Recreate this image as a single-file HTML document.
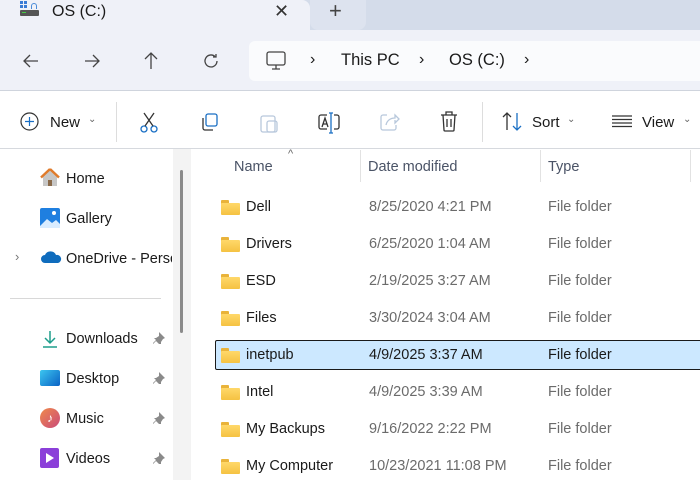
<!DOCTYPE html>
<html><head><style>
*{margin:0;padding:0;box-sizing:border-box}
body{width:700px;height:480px;overflow:hidden;background:#fff;font-family:"Liberation Sans",sans-serif;position:relative;color:#1a1a1a}
.abs{position:absolute}
.t{font-size:14.5px;white-space:nowrap}
svg{position:absolute;overflow:visible}
</style></head><body>
<div class="abs" style="left:0;top:0;width:700px;height:31px;background:#d4dcea"></div>
<div class="abs" style="left:0;top:0;width:310px;height:31px;background:#eff1f8;border-radius:0 8px 0 0"></div>
<div class="abs" style="left:310px;top:0;width:56px;height:30px;background:#dde3ef;border-radius:0 0 8px 8px"></div>
<div class="abs" style="left:0;top:30px;width:700px;height:61px;background:#eff1f8;border-bottom:1px solid #cfd4dd"></div>
<div class="abs" style="left:249px;top:41px;width:451px;height:40px;background:#fafbfd;border-radius:6px 0 0 6px"></div>
<!-- tab -->
<div class="abs" style="left:20px;top:1px;width:3px;height:3px;background:#3a7bd5;box-shadow:4px 0 #3a7bd5,0 4px #3a7bd5,4px 4px #3a7bd5"></div>
<div class="abs" style="left:31px;top:3px;width:6px;height:6px;border:1.5px solid #4a8bd8;border-bottom:none;border-radius:3px 3px 0 0"></div>
<div class="abs" style="left:20px;top:10px;width:19px;height:6px;background:#555;border-radius:1px"></div>
<div class="abs" style="left:22px;top:12px;width:4px;height:1px;background:#4c4"></div>
<div class="abs t" style="left:52px;top:3px;font-size:16px">OS (C:)</div>
<div class="abs" style="left:274px;top:1px;font-size:18px;color:#333">✕</div>
<div class="abs" style="left:329px;top:-2px;font-size:22px;color:#444">+</div>
<!-- nav -->
<svg style="left:23px;top:53px" width="16" height="16" fill="none" stroke="#444" stroke-width="1.3"><path d="M15 8H1M7 2L1 8l6 6"/></svg>
<svg style="left:84px;top:53px" width="16" height="16" fill="none" stroke="#444" stroke-width="1.3"><path d="M1 8h14M9 2l6 6-6 6"/></svg>
<svg style="left:143px;top:52px" width="16" height="17" fill="none" stroke="#444" stroke-width="1.3"><path d="M8 17V1M2 7l6-6 6 6"/></svg>
<svg style="left:203px;top:53px" width="16" height="16" fill="none" stroke="#444" stroke-width="1.3"><path d="M14 8a6 6 0 1 1-2-4.5M13 1v3h-3"/></svg>
<svg style="left:266px;top:51px" width="20" height="20" fill="none" stroke="#444" stroke-width="1.3"><rect x="1" y="1" width="18" height="13" rx="2"/><path d="M10 14v4M6 18h8"/></svg>
<div class="abs t" style="left:310px;top:51px;font-size:16px">›</div>
<div class="abs t" style="left:341px;top:51px;font-size:16.5px">This PC</div>
<div class="abs t" style="left:419px;top:51px;font-size:16px">›</div>
<div class="abs t" style="left:449px;top:51px;font-size:16.5px">OS (C:)</div>
<div class="abs t" style="left:524px;top:51px;font-size:16px">›</div>
<!-- toolbar -->
<div class="abs" style="left:0;top:148px;width:700px;height:1px;background:#d6d9de"></div>
<svg style="left:20px;top:112px" width="19" height="19" fill="none" stroke="#333" stroke-width="1.2"><circle cx="9.5" cy="9.5" r="8.5"/><path d="M9.5 5v9M5 9.5h9" stroke="#1a6fc4"/></svg>
<div class="abs t" style="left:50px;top:114px;font-size:15px">New</div>
<div class="abs" style="left:88px;top:114px;font-size:10px;color:#666">⌄</div>
<div class="abs" style="left:116px;top:102px;width:1px;height:40px;background:#ddd"></div>
<svg style="left:140px;top:112px" width="18" height="21" fill="none" stroke="#1a6fc4" stroke-width="1.3"><circle cx="4" cy="17" r="3"/><circle cx="14" cy="17" r="3"/><path d="M5 14L14 1M13 14L4 1" stroke="#333"/></svg>
<svg style="left:200px;top:113px" width="19" height="18" fill="none" stroke="#1a6fc4" stroke-width="1.3"><rect x="6" y="1" width="11" height="12" rx="2"/><path d="M3 5v10a2 2 0 0 0 2 2h8" stroke="#333"/></svg>
<svg style="left:260px;top:113px" width="18" height="20" fill="none" stroke="#b8c8dc" stroke-width="1.3"><rect x="1" y="3" width="14" height="16" rx="2"/><rect x="7" y="8" width="10" height="11" rx="2"/></svg>
<svg style="left:318px;top:112px" width="22" height="22" fill="none" stroke="#333" stroke-width="1.3"><path d="M9 3H3a2 2 0 0 0-2 2v10a2 2 0 0 0 2 2h6M16 3h3a2 2 0 0 1 2 2v10a2 2 0 0 1-2 2h-3"/><path d="M4 15l3-9 3 9M5 12h4"/><path d="M13 1v20M11 1h4M11 21h4" stroke="#1a6fc4"/></svg>
<svg style="left:380px;top:113px" width="20" height="18" fill="none" stroke="#b8c8dc" stroke-width="1.3"><path d="M7 2H3a2 2 0 0 0-2 2v11a2 2 0 0 0 2 2h11a2 2 0 0 0 2-2v-3M6 12c1-5 5-7 9-7V2l4 4-4 4V7"/></svg>
<svg style="left:440px;top:111px" width="18" height="21" fill="none" stroke="#333" stroke-width="1.3"><path d="M1 4h16M6 4V1h6v3M3 4l1 15a1 1 0 0 0 1 1h8a1 1 0 0 0 1-1l1-15M7 8v8M11 8v8"/></svg>
<div class="abs" style="left:482px;top:102px;width:1px;height:40px;background:#ddd"></div>
<svg style="left:502px;top:112px" width="21" height="19" fill="none" stroke-width="1.3"><path d="M5 18V1M1 5l4-4 4 4" stroke="#333"/><path d="M15 1v17M11 14l4 4 4-4" stroke="#1a6fc4"/></svg>
<div class="abs t" style="left:532px;top:114px;font-size:15px">Sort</div>
<div class="abs" style="left:567px;top:114px;font-size:10px;color:#666">⌄</div>
<svg style="left:612px;top:115px" width="20" height="12" fill="none" stroke="#333" stroke-width="1.2"><path d="M0 1h20M0 4.5h20M0 8h20M0 11.5h20"/></svg>
<div class="abs t" style="left:642px;top:114px;font-size:15px">View</div>
<div class="abs" style="left:683px;top:114px;font-size:10px;color:#666">⌄</div>
<!-- sidebar -->
<div class="abs" style="left:173px;top:149px;width:18px;height:331px;background:#f3f3f3"></div>
<div class="abs" style="left:180px;top:170px;width:3px;height:163px;background:#8a8a8a;border-radius:2px"></div>
<svg style="left:40px;top:168px" width="20" height="19"><path d="M10 1L1 9h2v9h14V9h2z" fill="#c7c7c7"/><path d="M10 1L1 9.5M10 1l9 8.5" stroke="#e07b2b" stroke-width="2.4" fill="none"/><rect x="8" y="12" width="4" height="6" fill="#8a6a4a"/></svg>
<div class="abs t" style="left:66px;top:171px">Home</div>
<svg style="left:40px;top:208px" width="20" height="20"><rect x="0" y="0" width="20" height="20" rx="2" fill="#1f7fe0"/><path d="M0 18l7-7 5 4 4-3 4 4v4H0z" fill="#d9ecff"/><circle cx="14" cy="5" r="2" fill="#fff"/></svg>
<div class="abs t" style="left:66px;top:211px">Gallery</div>
<div class="abs" style="left:15px;top:249px;font-size:13px;color:#777">›</div>
<svg style="left:40px;top:251px" width="22" height="12"><path d="M5 12a4 4 0 0 1 0-8 6 6 0 0 1 11 0 4 4 0 0 1 2 8z" fill="#0f6cbd"/></svg>
<div class="abs t" style="left:66px;top:251px;width:106px;overflow:hidden">OneDrive - Personal</div>
<div class="abs" style="left:10px;top:298px;width:151px;height:1px;background:#d8d8d8"></div>
<svg style="left:42px;top:330px" width="16" height="18" fill="none" stroke="#1e9e8c" stroke-width="1.5"><path d="M8 1v12M3 8l5 5 5-5M1 17h14"/></svg>
<div class="abs t" style="left:66px;top:331px">Downloads</div>
<div class="abs" style="left:40px;top:370px;width:20px;height:16px;border-radius:2px;background:linear-gradient(135deg,#3cc6f0,#0a62c4)"></div>
<div class="abs t" style="left:66px;top:371px">Desktop</div>
<div class="abs" style="left:40px;top:408px;width:20px;height:20px;border-radius:50%;background:linear-gradient(135deg,#f08a4b,#c94a7a);color:#fff;font-size:12px;text-align:center;line-height:20px">♪</div>
<div class="abs t" style="left:66px;top:411px">Music</div>
<div class="abs" style="left:40px;top:448px;width:19px;height:20px;border-radius:2px;background:#8b3fd9"></div>
<div class="abs" style="left:46px;top:453px;width:0;height:0;border-left:8px solid #fff;border-top:5px solid transparent;border-bottom:5px solid transparent"></div>
<div class="abs t" style="left:66px;top:451px">Videos</div>
<svg style="left:153px;top:332px" width="12" height="12"><path d="M6 0l6 6-2 1-2 3v2L6 12 3 9 0 12V11l3-3-2-2h2l3-2z" fill="#8a8a8a"/></svg>
<svg style="left:153px;top:372px" width="12" height="12"><path d="M6 0l6 6-2 1-2 3v2L6 12 3 9 0 12V11l3-3-2-2h2l3-2z" fill="#8a8a8a"/></svg>
<svg style="left:153px;top:412px" width="12" height="12"><path d="M6 0l6 6-2 1-2 3v2L6 12 3 9 0 12V11l3-3-2-2h2l3-2z" fill="#8a8a8a"/></svg>
<svg style="left:153px;top:452px" width="12" height="12"><path d="M6 0l6 6-2 1-2 3v2L6 12 3 9 0 12V11l3-3-2-2h2l3-2z" fill="#8a8a8a"/></svg>
<!-- headers -->
<div class="abs" style="left:288px;top:148px;font-size:11px;color:#666">^</div>
<div class="abs t" style="left:234px;top:159px;color:#4a5366">Name</div>
<div class="abs" style="left:360px;top:150px;width:1px;height:32px;background:#e2e2e2"></div>
<div class="abs t" style="left:368px;top:159px;color:#4a5366">Date modified</div>
<div class="abs" style="left:540px;top:150px;width:1px;height:32px;background:#e2e2e2"></div>
<div class="abs t" style="left:548px;top:159px;color:#4a5366">Type</div>
<div class="abs" style="left:690px;top:150px;width:1px;height:32px;background:#e2e2e2"></div>
<!-- selected -->
<div class="abs" style="left:215px;top:340px;width:490px;height:30px;background:#cce8ff;border:1px solid #1a1a1a;border-radius:2px"></div>
<div id="rows"></div>
<script>
var d=[["Dell","8/25/2020 4:21 PM"],["Drivers","6/25/2020 1:04 AM"],["ESD","2/19/2025 3:27 AM"],["Files","3/30/2024 3:04 AM"],["inetpub","4/9/2025 3:37 AM"],["Intel","4/9/2025 3:39 AM"],["My Backups","9/16/2022 2:22 PM"],["My Computer","10/23/2021 11:08 PM"]];
var h="";d.forEach(function(r,i){var y=200+i*37;var s=i==4;
h+='<div class="abs" style="left:221px;top:'+(y+0)+'px;width:19px;height:15px"><div style="position:absolute;left:0;top:0;width:8px;height:4px;background:#e9b33a;border-radius:1px 1px 0 0"></div><div style="position:absolute;left:0;top:3px;width:19px;height:12px;background:linear-gradient(#ffd86a,#f5c242);border-radius:1px"></div></div>';
h+='<div class="abs t" style="left:246px;top:'+(y-1)+'px">'+r[0]+'</div>';
h+='<div class="abs t" style="left:369px;top:'+(y-1)+'px;color:'+(s?'#1a1a1a':'#6b6b6b')+'">'+r[1]+'</div>';
h+='<div class="abs t" style="left:548px;top:'+(y-1)+'px;color:'+(s?'#1a1a1a':'#6b6b6b')+'">File folder</div>';});
document.getElementById("rows").innerHTML=h;
</script>
</body></html>
